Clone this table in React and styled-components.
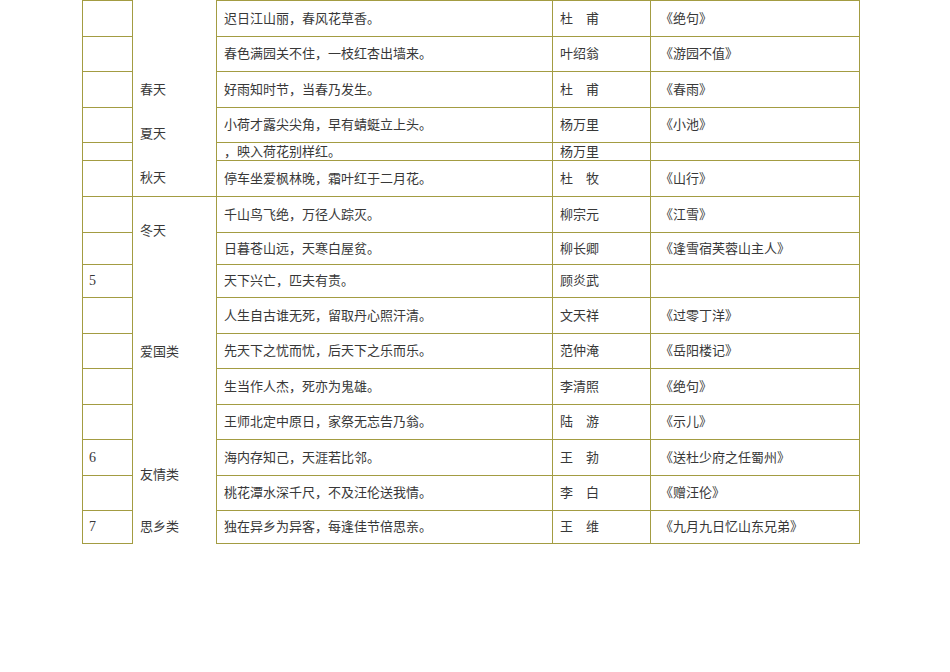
import React from 'react';
import styled, { createGlobalStyle } from 'styled-components';

const GlobalStyle = createGlobalStyle`
    html, body {
        margin: 0;
        padding: 0;
        background: #ffffff;
    }
    body {
        font-family: 'Liberation Serif', 'Noto Sans CJK SC', serif;
        color: #383838;
    }
`;

const LINE = '1px solid #a39c42';

const Page = styled.div`
    width: 950px;
    height: 672px;
    padding-left: 82px;
    box-sizing: border-box;
`;

const Table = styled.table`
    border-collapse: collapse;
    table-layout: fixed;
    width: 777px;
    font-size: 13px;
    line-height: 16px;
`;

const Row = styled.tr`
    height: ${(props) => props.h}px;
`;

const Cell = styled.td`
    border: ${LINE};
    padding: 0 7px;
    padding-left: ${(props) => (props.wide ? 9 : 7)}px;
    vertical-align: middle;
    white-space: nowrap;
    overflow: hidden;
`;

const NoCell = styled(Cell)`
    font-size: 14px;
    padding-left: 6px;
`;

const KindCell = styled.td`
    border-left: ${LINE};
    border-right: ${LINE};
    border-top: none;
    border-bottom: ${(props) => (props.closed ? LINE : 'none')};
    padding: 0 7px;
    vertical-align: middle;
    white-space: nowrap;
`;

const widths = [50, 84, 336, 98, 209];

// kind: [label, rowSpan, closed] on the first row of each group
const rows = [
    { h: 36, no: '', kind: ['', 2], line: '迟日江山丽，春风花草香。', poet: '杜　甫', title: '《绝句》' },
    { h: 35, no: '', line: '春色满园关不住，一枝红杏出墙来。', poet: '叶绍翁', title: '《游园不值》' },
    { h: 36, no: '', kind: ['春天', 1], line: '好雨知时节，当春乃发生。', poet: '杜　甫', title: '《春雨》' },
    { h: 35, no: '', kind: ['夏天', 2], line: '小荷才露尖尖角，早有蜻蜓立上头。', poet: '杨万里', title: '《小池》' },
    { h: 18, no: '', line: '，映入荷花别样红。', poet: '杨万里', title: '' },
    { h: 36, no: '', kind: ['秋天', 1, true], line: '停车坐爱枫林晚，霜叶红于二月花。', poet: '杜　牧', title: '《山行》' },
    { h: 36, no: '', kind: ['冬天', 2], line: '千山鸟飞绝，万径人踪灭。', poet: '柳宗元', title: '《江雪》' },
    { h: 32, no: '', line: '日暮苍山远，天寒白屋贫。', poet: '柳长卿', title: '《逢雪宿芙蓉山主人》' },
    { h: 33, no: '5', kind: ['爱国类', 5], line: '天下兴亡，匹夫有责。', poet: '顾炎武', title: '' },
    { h: 36, no: '', line: '人生自古谁无死，留取丹心照汗清。', poet: '文天祥', title: '《过零丁洋》' },
    { h: 35, no: '', line: '先天下之忧而忧，后天下之乐而乐。', poet: '范仲淹', title: '《岳阳楼记》' },
    { h: 36, no: '', line: '生当作人杰，死亦为鬼雄。', poet: '李清照', title: '《绝句》' },
    { h: 35, no: '', line: '王师北定中原日，家祭无忘告乃翁。', poet: '陆　游', title: '《示儿》' },
    { h: 36, no: '6', kind: ['友情类', 2], line: '海内存知己，天涯若比邻。', poet: '王　勃', title: '《送杜少府之任蜀州》' },
    { h: 35, no: '', line: '桃花潭水深千尺，不及汪伦送我情。', poet: '李　白', title: '《赠汪伦》' },
    { h: 33, no: '7', kind: ['思乡类', 1], line: '独在异乡为异客，每逢佳节倍思亲。', poet: '王　维', title: '《九月九日忆山东兄弟》' },
];

const App = () => (
    <Page>
        <GlobalStyle />
        <Table>
            <colgroup>
                {widths.map((w, i) => (
                    <col key={i} style={{ width: w }} />
                ))}
            </colgroup>
            <tbody>
                {rows.map((row, i) => (
                    <Row key={i} h={row.h}>
                        <NoCell>{row.no}</NoCell>
                        {row.kind && (
                            <KindCell rowSpan={row.kind[1]} closed={row.kind[2]}>
                                {row.kind[0]}
                            </KindCell>
                        )}
                        <Cell>{row.line}</Cell>
                        <Cell>{row.poet}</Cell>
                        <Cell wide>{row.title}</Cell>
                    </Row>
                ))}
            </tbody>
        </Table>
    </Page>
);

export default App;
